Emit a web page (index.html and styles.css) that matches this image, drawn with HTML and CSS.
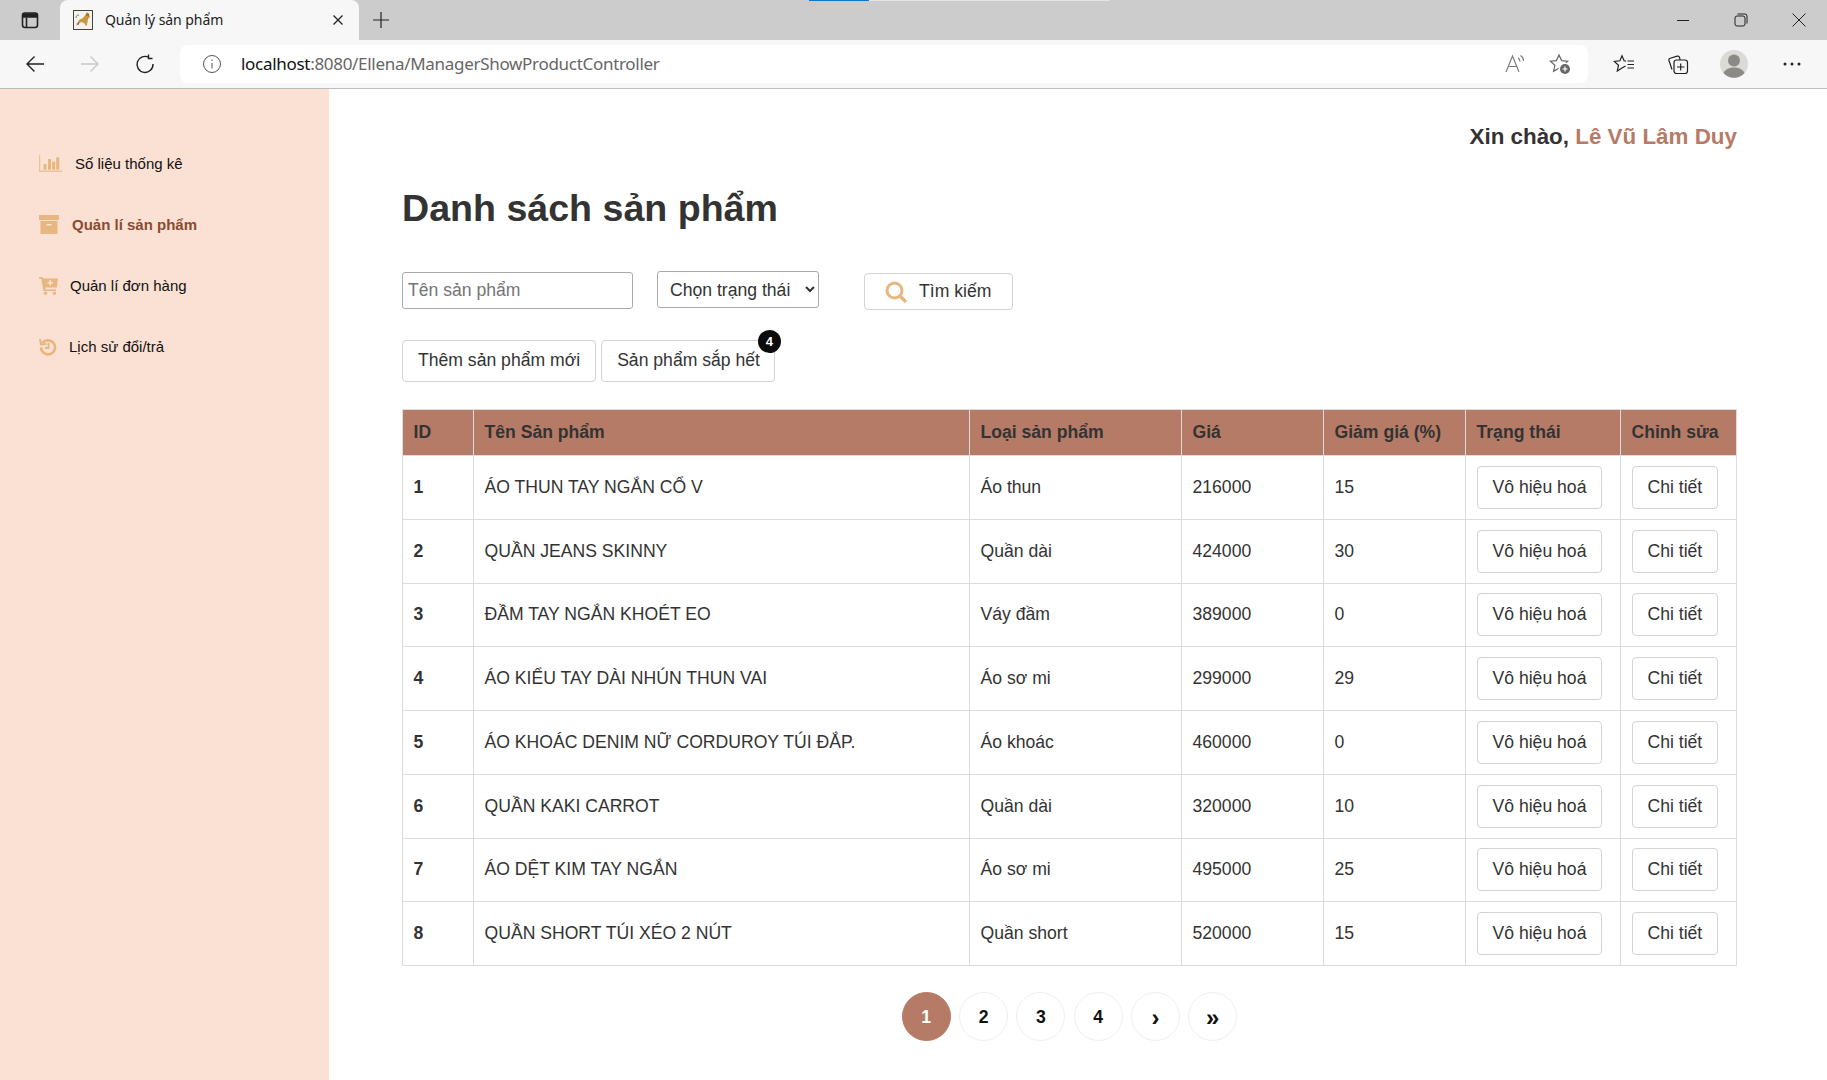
FILE: index.html
```html
<!DOCTYPE html>
<html lang="vi">
<head>
    <meta charset="UTF-8">
    <title>Quản lý sản phẩm</title>
    <link rel="stylesheet" href="styles.css">
</head>
<body>
    <div class="tabstrip">
        <div class="progress"><span class="progress-fill"></span></div>
        <svg class="tab-actions" width="20" height="20" viewBox="0 0 20 20" fill="none" stroke="#222" stroke-width="1.6">
            <rect x="2.500" y="3" width="15" height="14.500" rx="2.500"/>
            <path d="M3 4h14v3H3z" fill="#222"/>
            <path d="M6.500 7.500v10"/>
        </svg>
        <div class="tab">
            <svg class="favicon" width="20" height="20" viewBox="0 0 20 20">
                <rect x="0.500" y="0.500" width="19" height="19" fill="#f6f3ec" stroke="#444"/>
                <path d="M3 16l3-6 4-2 3-4 1-1 2 1 1 3-2 2-1 6-1 1-2-3-3-1z" fill="#c9973f"/>
                <path d="M3 8c0-2 1-3 3-3M6 12l-1 3M4 13l1 2" stroke="#777" fill="none"/>
                <path d="M13 4l1-2 1 2 1-1v3h-3z" fill="#a8782c"/>
            </svg>
            <span class="tab-title">Quản lý sản phẩm</span>
            <svg class="tab-close" width="12" height="12" viewBox="0 0 12 12" stroke="#222" stroke-width="1.300"><path d="M1.500 1.500l9 9M10.500 1.500l-9 9"/></svg>
        </div>
        <svg class="new-tab" width="18" height="18" viewBox="0 0 18 18" stroke="#222" stroke-width="1.200"><path d="M9 1v16M1 9h16"/></svg>
        <div class="window-btns">
            <svg width="14" height="14" viewBox="0 0 14 14" stroke="#222" stroke-width="1"><path d="M1 7.500h12"/></svg>
            <svg width="14" height="14" viewBox="0 0 14 14" fill="none" stroke="#222" stroke-width="1"><rect x="1" y="3" width="10" height="10" rx="2"/><path d="M3.500 1H11a2 2 0 0 1 2 2v7.500"/></svg>
            <svg width="14" height="14" viewBox="0 0 14 14" stroke="#222" stroke-width="1"><path d="M.5.5l13 13M13.500.5l-13 13"/></svg>
        </div>
    </div>
    <div class="toolbar">
        <svg class="nav-icon" width="20" height="20" viewBox="0 0 20 20" fill="none" stroke="#222" stroke-width="1.400"><path d="M19 10H2M9.500 2.500L2 10l7.500 7.500"/></svg>
        <svg class="nav-icon" width="20" height="20" viewBox="0 0 20 20" fill="none" stroke="#c8c8c8" stroke-width="1.400"><path d="M1 10h17M10.500 2.500L18 10l-7.500 7.500"/></svg>
        <svg class="nav-icon reload" width="20" height="20" viewBox="0 0 20 20" fill="none" stroke="#222" stroke-width="1.400"><path d="M14 3.500A8 8 0 1 0 18 10"/><path d="M13.500 .5v4h4"/></svg>
        <div class="addressbar">
            <svg width="20" height="20" viewBox="0 0 20 20" fill="none" stroke="#555" stroke-width="1"><circle cx="10" cy="10" r="8.500"/><path d="M10 9v5.500M10 5.500v1.500"/></svg>
            <span class="url"><span class="url-host">localhost</span>:8080/Ellena/ManagerShowProductController</span>
            <svg class="read-icon" width="22" height="20" viewBox="0 0 22 20" fill="none" stroke="#777" stroke-width="1.100"><path d="M1 18L7.500 2 14 18M3.500 12.500h8"/><path d="M13 4c1.500.8 2 2 2 3.500M15.500 1.500c2.200 1.200 3 3 3 5.500"/></svg>
            <svg class="fav-add" width="22" height="22" viewBox="0 0 22 22" fill="none" stroke="#666" stroke-width="1.200"><path d="M10 2l2.600 5.600 6.100.6-4.600 4.100 1.300 6-5.400-3.100-5.400 3.100 1.300-6-4.600-4.100 6.100-.6z"/><circle cx="16" cy="16" r="6.500" fill="#fff" stroke="none"/><circle cx="16" cy="16" r="5" fill="#666" stroke="none"/><path d="M16 13.500v5M13.500 16h5" stroke="#fff"/></svg>
        </div>
        <svg class="tool-icon fav-list" width="22" height="20" viewBox="0 0 22 20" fill="none" stroke="#222" stroke-width="1.200"><path d="M13 7.200l-1.900-.4L9 1.800 6.900 6.800l-5.600.6 4.200 3.800L4.300 17 9 14l3.500-2"/><path d="M14.500 7h6.500M14.500 10.500h6.500M14.500 14h6.500"/></svg>
        <svg class="tool-icon collections" width="22" height="22" viewBox="0 0 22 22" fill="none" stroke="#222" stroke-width="1.200"><rect x="7" y="7" width="13.500" height="13.500" rx="2.500"/><path d="M13.700 10.500v7M10 14h7.500"/><path d="M5 16.500L2 7.500c-.3-1 .2-2 1.200-2.300l7-2c1-.3 2 .2 2.300 1.200l.6 2.400"/></svg>
        <div class="avatar">
            <svg width="28" height="28" viewBox="0 0 28 28"><circle cx="14" cy="14" r="14" fill="#dcdad6"/><circle cx="14" cy="10.500" r="6" fill="#8c8a86"/><path d="M3.500 23c2-4 6-5.500 10.500-5.500S22.500 19 24.500 23A14 14 0 0 1 3.500 23z" fill="#8c8a86"/></svg>
        </div>
        <svg class="more" width="18" height="4" viewBox="0 0 18 4" fill="#222"><circle cx="2" cy="2" r="1.500"/><circle cx="9" cy="2" r="1.500"/><circle cx="16" cy="2" r="1.500"/></svg>
    </div>

    <div class="page">
        <aside class="sidebar">
            <a class="side-item">
                <svg width="23" height="17" viewBox="0 0 23 17"><path d="M0 0h1.200v15.500H23V17H0z" fill="#edc196"/><path d="M4.500 9h3v5.700h-3zM9 4h3v10.700H9zM13.200 6.700h3v8h-3zM17.200 2.300h3v12.400h-3z" fill="#e8b67f"/></svg>
                <span class="side-text side-text-1">Số liệu thống kê</span>
            </a>
            <a class="side-item side-active">
                <svg width="20" height="19" viewBox="0 0 20 19" fill="#e8b67f"><path d="M0 0h20v5H0z"/><path d="M1.500 6h17v13h-17zM7.500 9v1.500h5V9z" fill-rule="evenodd"/></svg>
                <span class="side-text side-text-2">Quản lí sản phẩm</span>
            </a>
            <a class="side-item">
                <svg width="19" height="18" viewBox="0 0 19 18" fill="#e8b67f"><path d="M0 0h3.500l.8 1.500H19l-1.200 9H6l.4 2H17V14H4.500L2.300 1.800H0zM10.500 3v2H8.500v1.500h2v2H12v-2h2V5h-2V3z" fill-rule="evenodd"/><circle cx="6.500" cy="16.300" r="1.700"/><circle cx="15.500" cy="16.300" r="1.700"/></svg>
                <span class="side-text side-text-3">Quản lí đơn hàng</span>
            </a>
            <a class="side-item">
                <svg width="18" height="18" viewBox="0 0 18 18" fill="none" stroke="#e8b67f" stroke-width="2.600"><path d="M3.500 5a7 7 0 1 1-1.500 4.500"/><path d="M9.500 5v5H6" stroke-width="1.800"/><path d="M1 1l1 5.500 5.500-.5" stroke-width="2"/></svg>
                <span class="side-text side-text-4">Lịch sử đổi/trả</span>
            </a>
        </aside>
        <main class="content">
            <div class="greeting">Xin chào, <span class="greeting-name">Lê Vũ Lâm Duy</span></div>
            <h1 class="title">Danh sách sản phẩm</h1>
            <form class="filters">
                <input class="search-input" type="text" placeholder="Tên sản phẩm">
                <select class="status-select"><option>Chọn trạng thái</option></select>
                <button class="btn search-btn" type="button">
                    <svg width="24" height="24" viewBox="0 0 24 24" fill="none" stroke="#e8b67f"><circle cx="10.500" cy="10.500" r="7.500" stroke-width="3"/><path d="M16 16l6 6" stroke-width="3.400"/></svg>
                    Tìm kiếm
                </button>
            </form>
            <div class="actions">
                <button class="btn action-btn" type="button">Thêm sản phẩm mới</button>
                <button class="btn action-btn low-stock" type="button">Sản phẩm sắp hết<span class="badge">4</span></button>
            </div>
            <table class="products">
                <thead>
                    <tr><th class="c-id">ID</th><th class="c-name">Tên Sản phẩm</th><th class="c-type">Loại sản phẩm</th><th class="c-price">Giá</th><th class="c-sale">Giảm giá (%)</th><th class="c-status">Trạng thái</th><th class="c-edit">Chỉnh sửa</th></tr>
                </thead>
                <tbody>
                    <tr><td class="id">1</td><td>ÁO THUN TAY NGẮN CỔ V</td><td>Áo thun</td><td>216000</td><td>15</td><td><button class="btn row-btn" type="button">Vô hiệu hoá</button></td><td><button class="btn row-btn" type="button">Chi tiết</button></td></tr>
                    <tr><td class="id">2</td><td>QUẦN JEANS SKINNY</td><td>Quần dài</td><td>424000</td><td>30</td><td><button class="btn row-btn" type="button">Vô hiệu hoá</button></td><td><button class="btn row-btn" type="button">Chi tiết</button></td></tr>
                    <tr><td class="id">3</td><td>ĐẦM TAY NGẮN KHOÉT EO</td><td>Váy đầm</td><td>389000</td><td>0</td><td><button class="btn row-btn" type="button">Vô hiệu hoá</button></td><td><button class="btn row-btn" type="button">Chi tiết</button></td></tr>
                    <tr><td class="id">4</td><td>ÁO KIỂU TAY DÀI NHÚN THUN VAI</td><td>Áo sơ mi</td><td>299000</td><td>29</td><td><button class="btn row-btn" type="button">Vô hiệu hoá</button></td><td><button class="btn row-btn" type="button">Chi tiết</button></td></tr>
                    <tr><td class="id">5</td><td>ÁO KHOÁC DENIM NỮ CORDUROY TÚI ĐẮP.</td><td>Áo khoác</td><td>460000</td><td>0</td><td><button class="btn row-btn" type="button">Vô hiệu hoá</button></td><td><button class="btn row-btn" type="button">Chi tiết</button></td></tr>
                    <tr><td class="id">6</td><td>QUẦN KAKI CARROT</td><td>Quần dài</td><td>320000</td><td>10</td><td><button class="btn row-btn" type="button">Vô hiệu hoá</button></td><td><button class="btn row-btn" type="button">Chi tiết</button></td></tr>
                    <tr><td class="id">7</td><td>ÁO DỆT KIM TAY NGẮN</td><td>Áo sơ mi</td><td>495000</td><td>25</td><td><button class="btn row-btn" type="button">Vô hiệu hoá</button></td><td><button class="btn row-btn" type="button">Chi tiết</button></td></tr>
                    <tr><td class="id">8</td><td>QUẦN SHORT TÚI XÉO 2 NÚT</td><td>Quần short</td><td>520000</td><td>15</td><td><button class="btn row-btn" type="button">Vô hiệu hoá</button></td><td><button class="btn row-btn" type="button">Chi tiết</button></td></tr>
                </tbody>
            </table>
            <div class="pagination">
                <a class="page-dot page-current">1</a>
                <a class="page-dot">2</a>
                <a class="page-dot">3</a>
                <a class="page-dot">4</a>
                <a class="page-dot page-arrow">›</a>
                <a class="page-dot page-arrow">»</a>
            </div>
        </main>
    </div>
</body>
</html>
```

FILE: styles.css
```css
* {
    box-sizing: border-box;
}
html, body {
    height: 100%;
}
body {
    margin: 0;
    font-family: "Liberation Sans", Arial, sans-serif;
    color: #212529;
    background-color: #fff;
    overflow: hidden;
}

/* browser chrome */
.tabstrip {
    position: relative;
    height: 40px;
    display: flex;
    align-items: flex-end;
    background-color: #cccccc;
}
.progress {
    position: absolute;
    top: 0;
    left: 809px;
    width: 301px;
    height: 1px;
    background-color: #e4e4e4;
}
.progress-fill {
    display: block;
    width: 60px;
    height: 1px;
    background-color: #0a78d7;
}
.tab-actions {
    margin: 0 20px 10px 20px;
}
.tab {
    width: 299px;
    height: 40px;
    display: flex;
    align-items: center;
    padding: 0 15px 0 13px;
    background-color: #f7f7f7;
    border-radius: 8px 8px 0 0;
    font-size: 14px;
    color: #222;
}
.favicon {
    margin-right: 12px;
}
.tab-title {
    flex: 1;
    margin-top: -1px;
    font-family: "Noto Sans", sans-serif;
    letter-spacing: -0.06px;
}
.new-tab {
    margin: 0 0 11px 13px;
}
.window-btns {
    margin: 0 21px 13px auto;
    display: flex;
    gap: 44px;
}

.toolbar {
    height: 49px;
    display: flex;
    align-items: center;
    padding: 0 0 1px 25px;
    background-color: #f7f7f7;
    border-bottom: 1px solid #bdbdbd;
}
.nav-icon {
    margin-right: 35px;
}
.reload {
    margin-right: 25px;
}
.addressbar {
    width: 1408px;
    height: 38px;
    display: flex;
    align-items: center;
    padding: 0 17px 0 22px;
    background-color: #fff;
    border-radius: 8px;
    margin-right: 25px;
}
.url {
    flex: 1;
    margin-left: 19px;
    font-family: "Noto Sans", sans-serif;
    font-size: 17px;
    letter-spacing: -0.3px;
    color: #666;
}
.url-host {
    color: #111;
}
.read-icon {
    margin-right: 22px;
}
.fav-list {
    margin-right: 32px;
}
.collections {
    margin-right: 31px;
}
.avatar {
    height: 28px;
    margin-right: 35px;
}

/* page */
.page {
    display: flex;
    height: calc(100vh - 89px);
}
.sidebar {
    width: 329px;
    flex-shrink: 0;
    padding: 44px 0 0 39px;
    background-color: #fbe0d4;
}
.side-item {
    height: 61px;
    display: flex;
    align-items: center;
    font-size: 15px;
    color: #111;
}
.side-active {
    font-weight: bold;
    color: #8a4b30;
}
.side-text-1 {
    margin-left: 13px;
}
.side-text-2 {
    margin-left: 13px;
}
.side-text-3 {
    margin-left: 12px;
}
.side-text-4 {
    margin-left: 12px;
}

.content {
    flex: 1;
    padding: 0 91px 0 73px;
}
.greeting {
    padding-top: 35px;
    text-align: right;
    font-size: 22.400px;
    font-weight: bold;
    line-height: 26px;
    color: #333;
}
.greeting-name {
    color: #b67b66;
}
.title {
    margin: 34px 0 0 0;
    font-size: 37.600px;
    line-height: 48px;
    color: #333;
}
.filters {
    display: flex;
    align-items: flex-start;
    margin-top: 39px;
}
.search-input {
    width: 231px;
    height: 37px;
    margin-top: 1px;
    padding: 0 5px;
    border: 1px solid #aaa;
    border-radius: 3px;
    font-family: inherit;
    font-size: 17.600px;
}
.search-input::placeholder {
    color: #757575;
}
.status-select {
    width: 162px;
    height: 37px;
    margin-left: 24px;
    padding-left: 8px;
    border: 1px solid #aaa;
    border-radius: 3px;
    background-color: #fff;
    font-family: inherit;
    font-size: 17.600px;
    color: #333;
}
.btn {
    background-color: #fff;
    border: 1px solid #d3d3d3;
    border-radius: 4px;
    font-family: inherit;
    font-size: 17.600px;
    color: #333;
}
.search-btn {
    width: 149px;
    height: 37px;
    margin-top: 2px;
    margin-left: 45px;
    display: flex;
    align-items: center;
    gap: 11px;
    padding: 0 0 0 19px;
}
.actions {
    display: flex;
    gap: 5px;
    margin-top: 30px;
}
.action-btn {
    height: 42px;
    padding: 0 15px 2px;
}
.low-stock {
    position: relative;
    padding-right: 14px;
}
.badge {
    position: absolute;
    top: -11px;
    right: -7px;
    width: 23px;
    height: 23px;
    border-radius: 50%;
    background-color: #0b0b0b;
    color: #fff;
    font-size: 13px;
    font-weight: bold;
    line-height: 23px;
    text-align: center;
}

.products {
    width: 1334px;
    margin-top: 27px;
    border-collapse: collapse;
    table-layout: fixed;
    font-size: 17.600px;
}
.products th, .products td {
    border: 1px solid #dcdcdc;
    padding: 0 10.500px;
    text-align: left;
    color: #333;
}
.products th {
    height: 46px;
    background-color: #b67b66;
    font-weight: bold;
}
.products td {
    height: 63.750px;
}
.products .id {
    font-weight: bold;
}
.c-id { width: 71px; }
.c-name { width: 496px; }
.c-type { width: 212px; }
.c-price { width: 142px; }
.c-sale { width: 142px; }
.c-status { width: 155px; }
.c-edit { width: 116px; }
.row-btn {
    height: 43px;
    padding: 0 15px;
}

.pagination {
    display: flex;
    justify-content: center;
    gap: 8.300px;
    margin-top: 26px;
}
.page-dot {
    width: 49px;
    height: 49px;
    display: flex;
    align-items: center;
    justify-content: center;
    padding-top: 2px;
    border: 1px solid #efefef;
    border-radius: 50%;
    font-size: 17.600px;
    font-weight: bold;
    color: #111;
}
.page-arrow {
    padding-top: 3px;
    font-size: 24px;
}
.page-current {
    background-color: #b67b66;
    border-color: #b67b66;
    color: #fff;
}
```
